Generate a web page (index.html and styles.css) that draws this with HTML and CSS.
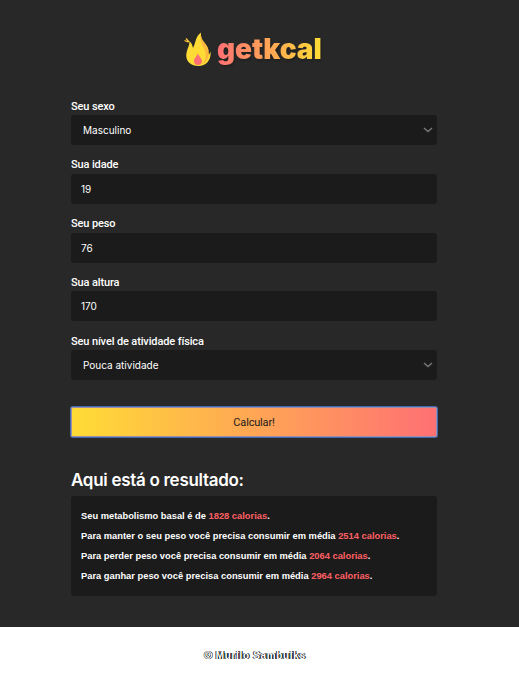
FILE: index.html
```
<!DOCTYPE html>
<html lang="pt-BR">
<head>
<meta charset="utf-8">
<title>getkcal</title>
<link rel="stylesheet" href="styles.css">
</head>
<body>
<main class="page">
  <header class="logo">
    <svg class="flame" viewBox="0 0 27 35" width="27" height="35" aria-hidden="true">
      <path fill="#ffdc35" d="M17 .5c-1 8 5 10 7 16 1 3 0 5 1 6 1-1 1-2 1.500-3 1 8-4 14.500-12 14.500C6 34 1 28 2.500 21c1-5 3-7 3-12 2 2 3 4 3.500 7C12 11 11 5 17 .5Z"/>
      <path fill="#fcb83f" d="M17 .5c-1 8 5 10 7 16 1 3 0 5 1 6-1 4-3 8-7 10 4-5 5-10 2-16-2-4-5-8-3-16Z"/>
      <path fill="none" stroke="#ffc43b" stroke-width="1.300" d="M.5 8.500 4 10M2 6.500l3 3.500"/>
      <path fill="#ff7074" d="M14 21c0 3 4 5 4 8 0 2.500-1.500 4-4 4s-4-1.500-4-4c0-3 3-4.500 4-8Z"/>
    </svg>
    <span class="wordmark">getkcal</span>
  </header>
  <form class="form">
    <div class="field"><span class="label">Seu sexo</span>
      <div class="control select"><span>Masculino</span><svg class="chevron" viewBox="0 0 10 6" width="10" height="6"><path d="M1 1l4 3.500L9 1"/></svg></div></div>
    <div class="field"><span class="label">Sua idade</span><div class="control">19</div></div>
    <div class="field"><span class="label">Seu peso</span><div class="control">76</div></div>
    <div class="field"><span class="label">Sua altura</span><div class="control">170</div></div>
    <div class="field"><span class="label">Seu nível de atividade física</span>
      <div class="control select"><span>Pouca atividade</span><svg class="chevron" viewBox="0 0 10 6" width="10" height="6"><path d="M1 1l4 3.500L9 1"/></svg></div></div>
    <button class="submit" type="button">Calcular!</button>
  </form>
  <section>
    <h1 class="title">Aqui está o resultado:</h1>
    <div class="result">
      <p>Seu metabolismo basal é de <b>1828 calorias</b>.</p>
      <p>Para manter o seu peso você precisa consumir em média <b>2514 calorias</b>.</p>
      <p>Para perder peso você precisa consumir em média <b>2064 calorias</b>.</p>
      <p>Para ganhar peso você precisa consumir em média <b>2964 calorias</b>.</p>
    </div>
  </section>
</main>
<footer class="footer">© Murilo Sambuiks</footer>
</body>
</html>
```
FILE: styles.css
```
* { box-sizing: border-box; }
body { margin: 0; background: #fff; font-family: "Liberation Sans", sans-serif; }
.page { height: 627px; padding: 32px 82px 0 71px; background: #282828; }
.logo { display: flex; height: 35px; width: 138px; margin-left: 113px; gap: 6px; }
.flame { flex: none; }
.wordmark {
  flex: none; height: 38px; font: 900 28px/35px Inter, sans-serif; letter-spacing: -.03px;
  color: transparent; background: linear-gradient(90deg, #ff7074, #ffdc35);
  -webkit-background-clip: text; background-clip: text;
  filter: drop-shadow(1px 2px 1px #0003);
}
.form { padding-top: 31.500px; }
.field { height: 58.750px; }
.label { display: block; height: 16.500px; color: #fff; font: 500 11px/16px Roboto, sans-serif; letter-spacing: -.13px; white-space: nowrap; }
.control { display: flex; align-items: center; height: 30px; padding: 0 10px; border-radius: 3px; background: #1b1b1b; color: #fff; font: 400 10px Inter, sans-serif; }
.select { justify-content: space-between; padding: 0 4px 0 12px; }
.chevron { fill: none; stroke: #777; stroke-width: 1.500; }
.submit { display: block; width: 100%; height: 30px; margin-top: 14.500px; padding: 1px 0 0; border: 0; border-radius: 2px; background: linear-gradient(90deg, #ffdc35, #ff7074); box-shadow: 0 0 0 1px #4668ae, inset 0 0 0 1px #9a8eaa; color: #1b1b1b; font: 11px Roboto, sans-serif; letter-spacing: -.17px; }
.title { margin: 32px 0 5px; height: 22px; color: #fff; font: 600 17px/22px Inter, sans-serif; letter-spacing: -.29px; white-space: nowrap; }
.result { height: 100px; padding: 10px; border-radius: 3px; background: #1b1b1b; color: #fff; font: bold 9.330px/20px "Liberation Sans", sans-serif; }
.result p { margin: 0; white-space: nowrap; }
.result b { color: #ff6064; }
.footer { height: 47px; padding-top: 21px; padding-right: 9px; text-align: center; color: #fff; font: bold 10px/16px "Liberation Sans", sans-serif; letter-spacing: .65px; text-shadow: 1px 0 #000, -1px 0 #234; }
```
